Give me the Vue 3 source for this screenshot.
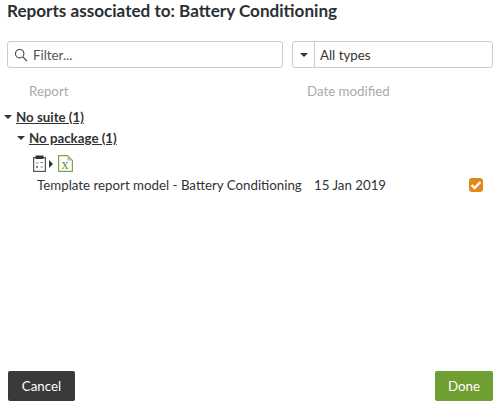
<script setup>
const reportName = "Template report model - Battery Conditioning";
</script>

<template>
  <div class="dialog">
    <h1 class="title">Reports associated to: Battery Conditioning</h1>

    <div class="filters">
      <div class="filter-box">
        <svg class="search" width="14" height="14" viewBox="0 0 14 14">
          <circle cx="5.7" cy="5.7" r="4.2" fill="none" stroke="#444" stroke-width="1.1" />
          <path d="M8.8 8.8L13 13" stroke="#444" stroke-width="1.2" fill="none" />
        </svg>
        <span class="placeholder">Filter...</span>
      </div>
      <div class="type-box">
        <div class="type-btn"><span class="caret"></span></div>
        <span class="type-value">All types</span>
      </div>
    </div>

    <div class="columns">
      <span class="col-report">Report</span>
      <span>Date modified</span>
    </div>

    <div class="group suite">
      <span class="caret"></span>
      <span class="group-label">No suite (1)</span>
    </div>
    <div class="group package">
      <span class="caret"></span>
      <span class="group-label">No package (1)</span>
    </div>

    <div class="icons">
      <svg width="14" height="17" viewBox="0 0 14 17">
        <rect x="1.6" y="2.6" width="11.8" height="13.8" fill="#fff" stroke="#555" stroke-width="1.2" />
        <rect x="3.5" y="0.5" width="8" height="3.5" fill="#333" />
        <path d="M4 7.5l1 1 1.5-1.5M8.5 7.5h2.5M4 11l2 2M6 11l-2 2M8.5 12h2.5" stroke="#777" stroke-width="0.9" fill="none" />
      </svg>
      <span class="play"></span>
      <svg width="15" height="17" viewBox="0 0 15 17">
        <path d="M.6 .6h9l4.8 4.8v11H.6z" fill="#fff" stroke="#7aa64a" stroke-width="1.2" />
        <path d="M9.5 .6v4.9h4.9z" fill="#a9c98a" />
        <text x="3.6" y="14" class="xls">x</text>
      </svg>
    </div>

    <div class="report-row">
      <span class="report-name">{{ reportName }}</span>
      <span class="report-date">15 Jan 2019</span>
      <span class="check">
        <svg width="14" height="14" viewBox="0 0 14 14">
          <path d="M2.6 7l3 3L11.4 4" fill="none" stroke="#fff" stroke-width="2.4" />
        </svg>
      </span>
    </div>

    <div class="footer">
      <button class="btn cancel">Cancel</button>
      <button class="btn done">Done</button>
    </div>
  </div>
</template>

<style scoped>
.dialog {
  width: 500px;
  height: 408px;
  box-sizing: border-box;
  padding: 0 7px 7px 7px;
  display: flex;
  flex-direction: column;
  background: #fff;
  color: #333;
  font-family: Lato, "Open Sans", sans-serif;
  font-size: 13.3px;
}

.title {
  margin: 0;
  padding-top: 1px;
  font-size: 17.1px;
  line-height: 20px;
  font-weight: 700;
  color: #2b2f33;
}

.filters {
  display: flex;
  justify-content: space-between;
  margin-top: 20px;
}

.filter-box,
.type-box {
  height: 27px;
  box-sizing: border-box;
  border: 1px solid #ccc;
  border-radius: 3px;
  display: flex;
  align-items: center;
}

.filter-box {
  width: 276px;
  padding-left: 6px;
}

.search {
  margin-right: 5px;
}

.placeholder {
  color: #555;
}

.type-box {
  width: 201px;
}

.type-btn {
  width: 21px;
  height: 100%;
  border-right: 1px solid #ccc;
  display: flex;
  align-items: center;
  justify-content: center;
}

.type-value {
  margin-left: 5px;
}

.caret {
  width: 0;
  height: 0;
  border-left: 4px solid transparent;
  border-right: 4px solid transparent;
  border-top: 4px solid #333;
}

.columns {
  display: flex;
  margin-top: 15px;
  color: #aaa;
  line-height: 16px;
}

.col-report {
  margin-left: 22px;
  width: 278px;
}

.group {
  display: flex;
  align-items: center;
  font-weight: 700;
  line-height: 18px;
}

.group-label {
  text-decoration: underline;
  margin-left: 5px;
}

.suite {
  margin-top: 9px;
  margin-left: -3px;
  padding-right: 1px;
}

.suite .group-label {
  margin-left: 4px;
}

.package {
  margin-top: 3px;
  margin-left: 10px;
}

.package .group-label {
  margin-left: 4px;
}

.icons {
  display: flex;
  align-items: center;
  margin-top: 8px;
  margin-left: 25px;
}

.play {
  margin: 0 5px 0 3px;
  width: 0;
  height: 0;
  border-top: 4px solid transparent;
  border-bottom: 4px solid transparent;
  border-left: 4px solid #333;
}

.xls {
  font-family: "Liberation Serif", serif;
  font-size: 14px;
  fill: #5d9732;
}

.report-row {
  display: flex;
  align-items: center;
  margin-top: 4px;
  height: 18px;
}

.report-name {
  margin-left: 30px;
  width: 277px;
  white-space: nowrap;
}

.report-date {
  width: 155px;
}

.check {
  width: 14px;
  height: 14px;
  background: #e08a1e;
  border-radius: 3px;
}

.check svg {
  display: block;
}

.footer {
  margin-top: auto;
  display: flex;
  justify-content: space-between;
}

.btn {
  height: 30px;
  border: 0;
  border-radius: 2px;
  color: #fff;
  font-family: inherit;
  font-size: 13.3px;
  padding: 0;
}

.cancel {
  width: 67px;
  margin-left: 1px;
  background: #3a3a3a;
}

.done {
  width: 58px;
  background: #6f9f33;
}
</style>
